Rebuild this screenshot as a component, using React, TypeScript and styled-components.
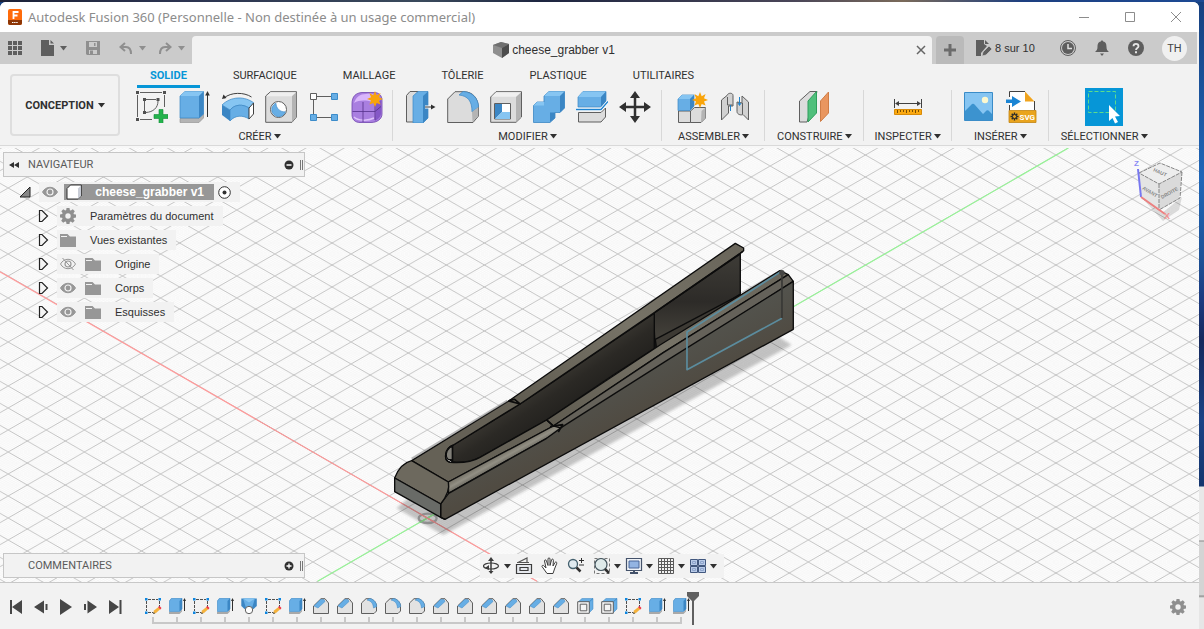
import React from "react";
import styled, { createGlobalStyle } from "styled-components";

const Global = createGlobalStyle`
  * { box-sizing: border-box; }
  html, body { margin: 0; padding: 0; }
  body { font-family: Roboto, "Liberation Sans", sans-serif; font-size: 11px; color: #303030; }
  button { font: inherit; color: inherit; background: none; border: 0; padding: 0; margin: 0; }
  ul, ol { list-style: none; margin: 0; padding: 0; }
  svg { display: block; }
`;

/* ---------- Shell ---------- */

const Desktop = styled.div`
  min-height: 100vh;
  display: flex;
  padding: 2px 5px 0 0;
  background:
    linear-gradient(to right, #1c2238 0, #2b3350 15%, #3a4a5c 35%, #1d2540 45%, #4a4658 66%, #7a6a5a 75%, #1d3f80 85%, #1d4a94 100%) top / 100% 2px no-repeat,
    linear-gradient(to bottom, #17407f 0, #1f66b8 178px, #1c5096 260px, #1b3a80 300px, #14285c 340px, #1a4285 420px, #14356e 486px, #e8e8e8 487px, #e8e8e8 540px, #8a8a8a 541px, #d4d4d4 542px, #d4d4d4 595px, #8a8a8a 596px, #e6e6e6 598px);
`;

const Window = styled.main`
  flex: 1;
  min-width: 0;
  display: flex;
  flex-direction: column;
  background: #f2f2f2;
  border-radius: 6px 6px 0 0;
  overflow: hidden;
`;

const TitleBar = styled.header`
  height: 30px;
  display: flex;
  align-items: center;
  background: #fff;
  padding: 0 7px;
`;

const AppTitle = styled.h1`
  margin: 0 0 0 5px;
  flex: 1;
  font: 400 13px/18px "Noto Sans", "Open Sans", sans-serif;
  color: #8c8c8c;
`;

const WindowControls = styled.div`
  display: flex;
  gap: 14px;
`;

const WindowButton = styled.button`
  width: 32px;
  height: 28px;
  display: grid;
  place-items: center;
`;

/* ---------- Application bar ---------- */

const AppBar = styled.div`
  height: 32px;
  display: flex;
  background: #cbcbcb;
  margin-right: 2px;
`;

const QuickTools = styled.div`
  width: 192px;
  display: flex;
  align-items: center;
  padding-left: 8px;
`;

const QuickButton = styled.button<{ $w: number; $dim?: boolean }>`
  width: ${(p) => p.$w}px;
  height: 24px;
  display: flex;
  align-items: center;
  gap: 6px;
  color: ${(p) => (p.$dim ? "#8f8f8f" : "#5e5e5e")};
`;

const DocumentTab = styled.div`
  flex: 1;
  margin-top: 4px;
  display: flex;
  align-items: center;
  padding: 0 6px 0 0;
  background: #f2f2f2;
  border-radius: 4px 4px 0 0;
`;

const DocumentName = styled.span`
  flex: 1;
  display: flex;
  align-items: center;
  justify-content: center;
  gap: 3px;
  font: 12px/16px "Liberation Sans", sans-serif;
`;

const AddTab = styled.button`
  width: 28px;
  margin: 4px 12px 0 4px;
  display: grid;
  place-items: center;
  background: #bababa;
  border-radius: 4px 4px 0 0;
`;

const AccountTools = styled.div`
  width: 221px;
  display: flex;
  align-items: center;
`;

const ExtensionCount = styled.button`
  width: 84px;
  display: flex;
  align-items: center;
  gap: 3px;
  font: 11px/16px "Liberation Sans", sans-serif;
`;

const AccountButton = styled.button`
  width: 34px;
  display: grid;
  justify-content: start;
`;

const Avatar = styled.button`
  width: 25px;
  height: 25px;
  border-radius: 50%;
  background: #f0f0f0;
  color: #444;
`;

/* ---------- Ribbon ---------- */

const Ribbon = styled.div`
  display: flex;
  height: 84px;
  padding-left: 10px;
  border-bottom: 2px solid #f7f7f7;
  box-shadow: inset 0 -1px #d9d9d9;
`;

const WorkspaceButton = styled.button`
  width: 110px;
  height: 62px;
  margin: 10px 13px 0 0;
  display: flex;
  align-items: center;
  justify-content: center;
  gap: 4px;
  border: 2px solid #dedede;
  border-radius: 4px;
  font-weight: 700;
`;

const RibbonBody = styled.div`
  flex: 1;
  min-width: 0;
`;

const RibbonTabs = styled.div`
  display: flex;
  gap: 20px;
  padding-left: 4px;
`;

const RibbonTab = styled.button<{ $active?: boolean }>`
  height: 24px;
  padding: 2px 13px 0;
  border-bottom: 3px solid ${(p) => (p.$active ? "#0696d7" : "transparent")};
  color: ${(p) => (p.$active ? "#0696d7" : "#303030")};
  font-weight: ${(p) => (p.$active ? 700 : 400)};
  white-space: nowrap;
`;

const Groups = styled.div`
  display: flex;
`;

const Group = styled.section<{ $pad: string }>`
  display: flex;
  flex-direction: column;
  align-items: center;
  flex-shrink: 0;
  padding: ${(p) => p.$pad};
  background: linear-gradient(#d8d8d8, #d8d8d8) right 2px / 1px 51px no-repeat;
  &:last-child { background: none; }
`;

const IconRow = styled.div`
  height: 38px;
  display: flex;
  align-items: center;
  gap: 11px;
`;

const ToolButton = styled.button<{ $on?: boolean }>`
  display: grid;
  place-items: center;
  width: ${(p) => (p.$on ? 38 : 32)}px;
  height: ${(p) => (p.$on ? 38 : 32)}px;
  background: ${(p) => (p.$on ? "#0696d7" : "none")};
`;

const GroupMenu = styled.button`
  display: flex;
  align-items: center;
  gap: 2px;
  height: 20px;
  white-space: nowrap;
`;

/* ---------- Viewport ---------- */

const Viewport = styled.div`
  position: relative;
  flex: 1;
  min-height: 434px;
  display: flex;
  flex-direction: column;
  padding: 4px 3px;
  overflow: hidden;
  background: #fefefe;
  border-bottom: 1px solid #c8c8c8;
`;

const Scene = styled.svg`
  position: absolute;
  inset: 0;
  width: 100%;
  height: 100%;
`;

const Panel = styled.div`
  position: relative;
  width: 302px;
  height: 25px;
  display: flex;
  align-items: center;
  padding: 0 1px 0 4px;
  background: #f2f2f2;
  border: 1px solid #c6c6c6;
  color: #5a5a5a;
`;

const PanelTitle = styled.h2<{ $inset?: boolean }>`
  flex: 1;
  margin: 0 0 0 ${(p) => (p.$inset ? 20 : 8)}px;
  font-size: 11px;
  font-weight: 400;
`;

const PanelGrip = styled.span`
  width: 3px;
  height: 10px;
  margin-left: 6px;
  border: solid #777;
  border-width: 0 1px;
`;

const Tree = styled.ul`
  position: relative;
  padding-top: 3px;
  font: 11px/20px "Liberation Sans", sans-serif;
`;

const TreeRow = styled.li<{ $root?: boolean }>`
  height: 24px;
  display: flex;
  align-items: center;
  padding-left: ${(p) => (p.$root ? 16 : 35)}px;
`;

const Twisty = styled.button<{ $root?: boolean }>`
  width: ${(p) => (p.$root ? 20 : 19)}px;
`;

const NodeBox = styled.span`
  display: flex;
  align-items: center;
  height: 20px;
  padding: 0 9px 0 3px;
  background: #f2f2f2;
`;

const NodeIcon = styled.span<{ $root?: boolean }>`
  width: ${(p) => (p.$root ? 22 : 25)}px;
`;

const NodeLabel = styled.span`
  margin-left: 5px;
`;

const RootLabel = styled.span`
  width: 150px;
  height: 16px;
  display: flex;
  align-items: center;
  justify-content: space-between;
  padding: 0 10px 0 2px;
  margin-right: 4px;
  background: #979797;
  color: #fff;
  font-size: 12px;
  font-weight: 700;
`;

const Spacer = styled.div`
  flex: 1;
`;

const ViewTools = styled.div`
  position: absolute;
  left: 40%;
  bottom: 4px;
  height: 24px;
  display: flex;
  align-items: center;
  padding: 0 3px;
  background: #f2f2f2;
`;

const ViewButton = styled.button<{ $menu?: boolean }>`
  width: ${(p) => (p.$menu ? 32 : 26)}px;
  display: flex;
  align-items: center;
  gap: 3px;
`;

const CubeButton = styled.button`
  position: absolute;
  top: 10px;
  right: 13px;
`;

/* ---------- Timeline ---------- */

const Timeline = styled.footer`
  height: 46px;
  display: flex;
  align-items: flex-start;
  padding: 8px 11px 0 8px;
`;

const Playback = styled.div`
  display: flex;
  gap: 9px;
  width: 133px;
`;

const PlayButton = styled.button`
  width: 16px;
  height: 32px;
  display: grid;
  place-items: center;
`;

const Features = styled.ol`
  display: flex;
  flex: 1;
`;

const Feature = styled.li`
  width: 24px;
  height: 33px;
  padding: 7px 0 0 4px;
  background:
    linear-gradient(#c8c8c8, #c8c8c8) 11px 26px / 2px 5px no-repeat,
    linear-gradient(#c8c8c8, #c8c8c8) 0 31px / 100% 2px no-repeat;
  &:first-child { background-position: 11px 26px, 11px 31px; }
  &:nth-last-child(2) {
    background:
      linear-gradient(#c8c8c8, #c8c8c8) 11px 26px / 2px 5px no-repeat,
      linear-gradient(#c8c8c8, #c8c8c8) 0 31px / 13px 2px no-repeat;
  }
`;

const Marker = styled.li`
  margin-left: -6px;
`;

const SettingsButton = styled.button`
  width: 20px;
  height: 32px;
  display: grid;
  place-items: center;
`;

/* ---------- Icons ---------- */

const Caret = ({ color = "#303030" }: { color?: string }) => (
  <svg width="7" height="5" viewBox="0 0 7 5"><path d="M0 0h7L3.5 4.5z" fill={color} /></svg>
);

const Svg = ({ size = 32, h, children }: { size?: number; h?: number; children: React.ReactNode }) => (
  <svg width={size} height={h ?? size} viewBox={`0 0 ${size} ${h ?? size}`} fill="none">{children}</svg>
);

const B = "#67aee5";
const BD = "#3b86c4";
const BL = "#86c5f2";
const G = "#dcdcdc";
const GD = "#b4b4b4";
const K = "#5f5f5f";
const star = "M8 0l1.700 4.200L13.600 2 12 6.200 16 8l-4 1.600 1.600 4-3.900-1.700L8 16l-1.700-4.100-3.900 1.700L4 9.600 0 8l4-1.800L2.400 2l3.900 2.200z";
const Star = ({ x, y }: { x: number; y: number }) => <path transform={`translate(${x} ${y})`} d={star} fill="#f9a40a" />;

const createIcons: [string, React.ReactNode][] = [
  ["Créer une esquisse", <Svg>
    <path d="M4 1.500h22M1.500 4v22M28.500 4v12M4 28.500h12" stroke={K} />
    <path d="M10 8.500h10M8.500 10v10M22 10c0 7-5 11-12 11.500" stroke={K} />
    <path d="M0 0h3v3H0zM27 0h3v3h-3zM0 27h3v3H0zM7 7h3v3H7zM20.500 7h3v3h-3zM7 20h3v3H7z" fill="#505050" />
    <path d="M23 18.500h4v5h5v4h-5v5h-4v-5h-5v-4h5z" fill="#23b34c" stroke="#128a38" strokeWidth=".6" />
  </Svg>],
  ["Extrusion", <Svg>
    <path d="M1 27.500h19l4.500-4.500v4L20 31.500H1z" fill={GD} stroke="#8d8d8d" strokeWidth=".6" />
    <path d="M1 5L6 .5h18.500V23L20 27H1z" fill={B} stroke={BD} strokeWidth=".7" />
    <path d="M1 5L6 .5h18.500L20 5z" fill={BL} /><path d="M20 5l4.500-4.500V23L20 27z" fill={BD} />
    <path d="M28.500 3v23" stroke="#303030" /><path d="M28.500 0l2.300 4.500h-4.600z" fill="#303030" />
  </Svg>],
  ["Révolution", <Svg>
    <path d="M0 14C9 5 23 5 32 12l-5 5c-6-4-14-4-19 2z" fill={BL} stroke={BD} strokeWidth=".7" />
    <path d="M8 19c5-6 13-6 19-2v11c-6-4-14-4-19 2z" fill={B} stroke={BD} strokeWidth=".7" />
    <path d="M0 14l8 5v11l-8-6z" fill={BD} />
    <path d="M27 17l4.500-5v11L27 28z" fill="#fff" stroke="#404040" />
    <path d="M2 7C9 1 22 1 29.500 6" stroke="#404040" /><path d="M0 8l1.500-4.500L4.500 7z" fill="#303030" />
  </Svg>],
  ["Perçage", <Svg>
    <path d="M.7 5L5.500.7h26V26L27 31.300H.7z" fill={G} stroke={K} />
    <path d="M1.300 5.300L5.800 1.300h25L27 5.300z" fill="#efefef" /><path d="M27 5.300l4.300-4V26L27 31z" fill={GD} />
    <circle cx="13.500" cy="18.500" r="8" fill="#fff" stroke={K} />
    <path d="M11 12.200c0 5 4 9 9.400 8.600a7 7 0 1 1-9.400-8.600z" fill={B} stroke={BD} strokeWidth=".6" />
  </Svg>],
  ["Réseau", <Svg>
    <path d="M9 5.500h14M5.500 9v14M9 26.500h14" stroke={K} />
    <path d="M2.500 2.500h6v6h-6z" fill="#fff" stroke={K} />
    <path d="M23.500 2.500h6v6h-6zM2.500 23.500h6v6h-6zM23.500 23.500h6v6h-6z" fill={B} stroke="#3c8cca" />
  </Svg>],
  ["Créer une forme", <Svg>
    <path d="M1 13C1 5 5 2 11 1.500h12c5 0 8 3 8 8V23c0 5-5 8.500-11 8.500H9c-5 0-8-3-8-8z" fill="#a97fe0" stroke="#6f42ad" strokeWidth=".8" />
    <path d="M3 12c2-6 6-9 12-9 6-1 10 1 10 4l-4 4c-6-2-13-2-18 1z" fill="#d9b6fb" />
    <path d="M25 12l5-3v13c0 4-3 6-6 8z" fill="#8558c7" />
    <path d="M3 26c4 4 14 4 20 1" stroke="#dcc0fa" strokeWidth="1.500" />
    <path d="M1.500 20.500H24l6-5M12 11v20M24 11v18" stroke="#55318c" strokeWidth=".8" />
    <Star x={16} y={0} />
  </Svg>],
];

const modifyIcons: [string, React.ReactNode][] = [
  ["Appuyer/Tirer", <Svg>
    <path d="M2.500 4.500L6 .5h8V31H2.500z" fill={G} stroke={K} />
    <path d="M9 5l5-4.500h10V27l-5 5H9z" fill={B} stroke={BD} strokeWidth=".7" /><path d="M19 5l5-4.500V27l-5 5z" fill={BD} />
    <path d="M21 16h7" stroke="#fff" strokeWidth="3" /><path d="M21 16h7" stroke="#303030" /><path d="M31.500 16L27 13.500v5z" fill="#303030" />
  </Svg>],
  ["Congé", <Svg>
    <path d="M.7 8L8 .7h9C26 1 31 7 31.500 17v8L26 31.500H.7z" fill={G} stroke={K} />
    <path d="M12 4L16 .5C26 1 31.500 8 31.500 16L25 21C25 10 21 5 12 4z" fill={B} stroke={BD} strokeWidth=".7" />
    <path d="M25 21l6.300-5v9L25.500 31z" fill={GD} />
  </Svg>],
  ["Coque", <Svg>
    <path d="M.7 6L6 .7h25.500V26L26 31.300H.7z" fill={G} stroke={K} /><path d="M1.500 5.800L6.200 1.300h25L26 5.800z" fill="#f0f0f0" />
    <path d="M26 6l5-4.500V26l-5 5z" fill={GD} />
    <path d="M4.500 12.500h16V28h-16z" fill="#fff" stroke={K} /><path d="M5 13h7v8l-7 7z" fill={BD} /><path d="M12 21h8v7H5z" fill={BL} />
  </Svg>],
  ["Combiner", <Svg>
    <path d="M.5 14.500L4 11h7V5L16 .5h15.500V17L27 21.500h-5V27l-5 4.500H.5z" fill={B} stroke={BD} strokeWidth=".8" />
    <path d="M11 5L16 .5h15.500L27 5zM.5 14.500L4 11h7v3.500z" fill={BL} /><path d="M27 5l4.500-4.500V17L27 21.500zM17 26v-4.500h5V27l-5 4z" fill={BD} />
  </Svg>],
  ["Scinder le corps", <Svg>
    <path d="M2 6L7 .5h23V11L25 16H2z" fill={B} stroke={BD} strokeWidth=".7" /><path d="M2 6L7 .5h23L25 6z" fill={BL} /><path d="M25 6l5-5.500V11L25 16z" fill={BD} />
    <path d="M2.500 21.500H25L29.500 17v9L25 31H2.500z" fill={G} stroke={K} />
    <path d="M0 18.500h25l7-8" stroke="#fff" strokeWidth="3" /><path d="M0 18.500h25l7-8" stroke="#1d82cf" strokeWidth="1.300" />
  </Svg>],
  ["Déplacer", <Svg>
    <path d="M16 4v24M4 16h24" stroke="#303030" strokeWidth="2.500" />
    <path d="M16 0l5 7H11zM16 32l5-7H11zM0 16l7-5v10zM32 16l-7-5v10z" fill="#303030" />
  </Svg>],
];

const assembleIcons: [string, React.ReactNode][] = [
  ["Nouveau composant", <Svg>
    <path d="M2.500 20h12v11.500h-12z" fill={G} stroke={K} /><path d="M14.500 20l4-3.500h11V27L25 31.500H14.500z" fill={G} stroke={K} /><path d="M25.500 20l4-3.500V27L25 31z" fill={GD} />
    <path d="M2 8l4-4h12v11l-4 4.500H2z" fill={B} stroke={BD} strokeWidth=".7" /><path d="M2 8l4-4h12l-4 4z" fill={BL} /><path d="M14 8l4-4v11l-4 4.500z" fill={BD} />
    <Star x={16} y={1} />
  </Svg>],
  ["Liaison", <Svg>
    <path d="M2.500 9L8 4.500c1-3 6-3 6 0V15H9.500v7l-7 7z" fill="#d2d2d2" stroke={K} /><path d="M8.500 6v8h5" stroke={K} />
    <path d="M29.500 29L24 23.500c-2 1-6 0-6-3V11l5 1V5l6.500 6z" fill="#d2d2d2" stroke={K} /><path d="M23.500 12v11" stroke={K} />
    <path d="M11.500 14v6M20.500 6v8M19 12l1.500 2.500L22 12" stroke="#1f83cc" />
  </Svg>],
];

const constructIcons: [string, React.ReactNode][] = [
  ["Plan de construction", <Svg>
    <path d="M1.500 10L12 .5h7L9 31H1.500z" fill={G} stroke={K} /><path d="M10 10L18.500.5V22L10 31z" fill="#50c07c" stroke="#2f9e5c" />
    <path d="M22.500 10L30.500 1v21l-8 8.500z" fill="#e9965f" stroke="#cf7d46" />
  </Svg>],
];

const inspectIcons: [string, React.ReactNode][] = [
  ["Mesurer", <Svg>
    <path d="M2.500 8v9M29.500 8v9M5 12.500h22" stroke="#404040" /><path d="M3 12.500l4-2.500v5zM29 12.500L25 10v5z" fill="#404040" />
    <path d="M2.500 18.500h27v5h-27z" fill="#fba911" stroke="#d88b08" /><path d="M5.500 19v3M8.500 19v2M11.500 19v2M14.500 19v3M17.500 19v2M20.500 19v2M23.500 19v3M26.500 19v2" stroke="#7b4e00" />
  </Svg>],
];

const insertIcons: [string, React.ReactNode][] = [
  ["Insérer une image", <Svg>
    <path d="M1.500 1.500h28v28h-28z" fill={BL} stroke="#3a8cc8" /><circle cx="22" cy="9" r="3.200" fill="#fdf8cf" />
    <path d="M2 20l7-7q1.500-1 3 1l8 9 3.500-3.500q1.500-1 3 1L29 23v6H2z" fill="#3c93cf" />
  </Svg>],
  ["Insérer un fichier SVG", <Svg>
    <path d="M3.500.5H19l9.500 9.500v10h-25z" fill="#fff" /><path d="M3.500 6V.5H19M3.500 14v6M28.500 10v9" stroke="#404040" /><path d="M19 .5v10h9.500z" fill="#f0a41f" />
    <path d="M-3 8.500h9V5l9 5.500L6 16v-4h-9z" fill="#1a84d4" />
    <path d="M3 19.500h27v12H3z" fill="#e9a41d" stroke="#c28412" strokeWidth=".8" />
    <path d="M8.500 21.500v8M4.500 25.500h8M5.700 22.700l5.600 5.600M11.300 22.700l-5.600 5.600" stroke="#2a2a2a" strokeWidth="1.400" /><circle cx="8.500" cy="25.500" r="2" fill="#e9a41d" stroke="#2a2a2a" />
    <text x="13.500" y="29" fontSize="8" fontWeight="700" fill="#fff" fontFamily="Roboto">SVG</text>
  </Svg>],
];

const selectIcons: [string, React.ReactNode][] = [
  ["Sélectionner", <Svg size={38}>
    <path d="M3.500 3.500h27v21h-27z" stroke="#5ddc8c" strokeDasharray="4 2" />
    <path d="M24 17l11 11-5 .5 3 5.500-3 1.500-2.500-5.500-3.500 3z" fill="#fff" />
  </Svg>],
];

const gearPath = "M6.500 0h3l.4 2.200 1 .4 1.900-1.300 2 2-1.300 1.900.4 1 2.100.3v3l-2.200.4-.4 1 1.300 1.900-2 2-1.900-1.300-1 .4L9.500 16h-3l-.4-2.200-1-.4-1.900 1.300-2-2 1.300-1.900-.4-1L0 9.500v-3l2.200-.4.400-1-1.300-1.900 2-2 1.900 1.300 1-.4zM8 5.300a2.700 2.700 0 1 0 0 5.400 2.700 2.700 0 0 0 0-5.400z";
const Gear = () => <Svg size={16}><path d={gearPath} fill="#8f8f8f" fillRule="evenodd" /></Svg>;
const Folder = () => <Svg size={16} h={13}><path d="M0 0h7.500L10 2.500h6V13H0z" fill="#979797" /><path d="M1 2.500h6" stroke="#f2f2f2" /></Svg>;
const Eye = ({ off }: { off?: boolean }) => (
  <Svg size={16} h={12}>
    <path d="M.5 6C4-.3 12-.3 15.500 6 12 12.300 4 12.300.5 6z" fill={off ? "none" : "#979797"} stroke="#979797" />
    <circle cx="8" cy="6" r="3" fill={off ? "none" : "#979797"} stroke={off ? "#979797" : "#f2f2f2"} strokeWidth="1.200" />
    {off && <path d="M2.500 0l11 12" stroke="#979797" />}
  </Svg>
);

const SketchMini = () => (
  <Svg size={17}>
    <path d="M3 1.500h10M1.500 3v10M14.500 3v6M3 14.500h5" stroke="#505050" strokeDasharray="3 1" />
    <path d="M0 0h2.500v2.500H0zM13.500 0H16v2.500h-2.500zM0 13.500h2.500V16H0z" fill="#0d86e0" />
    <path d="M8 16l1-3.500 4.500-3.500 2 2-4.500 4z" fill="#f5b23c" /><path d="M13 9l1.500-1 2 2-1.200 1.500z" fill="#ee3344" /><path d="M8 16l.6-2 1.700 1.500z" fill="#555" />
  </Svg>
);
const ExtrudeMini = () => (
  <Svg size={17}>
    <path d="M0 14h10.500L13 11.500v2L10.500 16H0z" fill="#a9a9a9" />
    <path d="M.3 3L2.500.3H13V11l-2.500 2.500H.3z" fill={B} stroke={BD} strokeWidth=".6" /><path d="M10.500 3L13 .3V11l-2.500 2.500z" fill={BD} />
    <path d="M15.500 2v11" stroke="#303030" /><path d="M15.500 0L17 3h-3z" fill="#303030" />
  </Svg>
);
const LoftMini = () => (
  <Svg size={17}><path d="M.3.500h15.500V8L12.500 11h-9L.3 8z" fill={BD} /><path d="M2 .5h12L11 10H5z" fill={B} /><path d="M2 .5h12L8 4.500z" fill={BL} /><circle cx="8" cy="12" r="3.700" fill="#fff" stroke={K} /></Svg>
);
const ChamferMini = () => (
  <Svg size={17}><path d="M.5 8L8 .7h4L15.500 5v10.500H.5z" fill="#e2e2e2" stroke={K} /><path d="M1 8L7.500 1.500h3.500L12 3.500 5 10z" fill={B} stroke={BD} strokeWidth=".5" /></Svg>
);
const FilletMini = () => (
  <Svg size={17}><path d="M.5 5L5 .7h4c4 .8 6.500 4 6.500 8V13L13 15.500H.5z" fill="#e2e2e2" stroke={K} /><path d="M6 2L8.500.5C13 1 15.700 5 15.700 8.500L12.500 10C12 5 10 3 6 2z" fill={B} stroke={BD} strokeWidth=".5" /></Svg>
);
const ShellMini = () => (
  <Svg size={17}><path d="M1 4L5 .5h11L12 4zM12 4l4-3.500V11l-4 4z" fill={B} stroke={BD} strokeWidth=".5" /><path d="M.7 3.700h11.600v11.600H.7zM3.200 6.200h6.600v6.600H3.200z" fill="#f4f4f4" stroke={K} /></Svg>
);

const featureIcons: Record<string, () => React.JSX.Element> = {
  sketch: SketchMini, extrude: ExtrudeMini, loft: LoftMini, chamfer: ChamferMini, fillet: FilletMini, shell: ShellMini,
};
const history = [
  "sketch", "extrude", "sketch", "extrude", "loft", "sketch", "extrude", "chamfer", "chamfer", "fillet", "fillet", "fillet",
  "chamfer", "chamfer", "chamfer", "chamfer", "chamfer", "chamfer", "shell", "shell", "sketch", "extrude", "extrude",
];

const playback: [string, string][] = [
  ["Début", "M2 1h2v14H2zM14 1v14L4 8z"],
  ["Reculer", "M11 1.500v13L1 8zM12.500 5h2v6h-2z"],
  ["Lire", "M2 0l12 8L2 16z"],
  ["Avancer", "M4.500 1.500v13L14 8zM1 5h2v6H1z"],
  ["Fin", "M1 1v14l10-7zM11.500 1h2v14h-2z"],
];

const groups: { name: string; pad: string; icons: [string, React.ReactNode][] }[] = [
  { name: "CRÉER", pad: "0 10px 0 3px", icons: createIcons },
  { name: "MODIFIER", pad: "0 11px", icons: modifyIcons },
  { name: "ASSEMBLER", pad: "0 14px", icons: assembleIcons },
  { name: "CONSTRUIRE", pad: "0 12px", icons: constructIcons },
  { name: "INSPECTER", pad: "0 11px", icons: inspectIcons },
  { name: "INSÉRER", pad: "0 11px", icons: insertIcons },
  { name: "SÉLECTIONNER", pad: "0 12px", icons: selectIcons },
];

const viewTools: [string, boolean, React.ReactNode][] = [
  ["Orbite", true, <Svg size={18}><ellipse cx="8" cy="9" rx="7.500" ry="3" stroke="#3c3c3c" strokeWidth="1.200" /><path d="M8 2v14" stroke="#3c3c3c" strokeWidth="1.500" /><path d="M8 0l3 4H5zM8 17l2.500-3h-5zM2 11l4-3v5z" fill="#3c3c3c" /></Svg>],
  ["Regarder", false, <Svg size={18}><path d="M1.500 7.500h15v9h-15zM5 10.500h8v3H5z" fill="#e6e9ee" stroke="#3c3c3c" strokeWidth="1.200" /><path d="M3 5.500L12 1v4.500M2 5.500h12" stroke="#555" strokeWidth="1.200" /></Svg>],
  ["Panoramique", false, <Svg size={18}><path d="M6 16.500L1 9.500c0-1.500 1.500-1.500 2.200-.5L5 11 3.500 4c0-1.500 1.700-1.500 2 0L7 8.500V2c0-1.500 2-1.500 2 0v6.500L10.500 3c.5-1.500 2-1 1.900.3L12 9l2-3.500c.7-1 2-.5 1.800.7L13.500 12 12 16.500z" fill="#fff" stroke="#3c3c3c" /></Svg>],
  ["Zoom", false, <Svg size={18}><circle cx="6" cy="7" r="4.500" fill="#dfeaf0" stroke="#44606e" strokeWidth="1.300" /><path d="M9.500 10.500l4 4" stroke="#303030" strokeWidth="2.500" /><path d="M12 3.500h5M14.500 1v5M12 8h5" stroke="#303030" /></Svg>],
  ["Zoom fenêtre", true, <Svg size={18}><path d="M1.500 1.500h15v15h-15z" stroke="#777" strokeDasharray="3 2" /><circle cx="8" cy="7.500" r="6" fill="#dfeaea" stroke="#44555e" strokeWidth="1.200" /><path d="M12 12l4 4" stroke="#303030" strokeWidth="2.500" /></Svg>],
  ["Affichage", true, <Svg size={18}><path d="M1.500 1.500h15v12h-15z" fill="#eef2f7" stroke="#44526a" strokeWidth="1.200" /><path d="M4 4h10v7H4z" fill="#93b4e2" stroke="#4a6799" /><path d="M5 16h8M9 14v2" stroke="#44526a" strokeWidth="2" /></Svg>],
  ["Grille", true, <Svg size={18}><path d="M1.500 1.500h15v15h-15zM4.500 1v16M7.500 1v16M10.500 1v16M13.500 1v16M1 4.500h16M1 7.500h16M1 10.500h16M1 13.500h16" stroke="#5a5a5a" /></Svg>],
  ["Vues", true, <Svg size={18}><path d="M1.500 2.500h7v6h-7zM9.500 2.500h7v6h-7zM1.500 9.500h7v6h-7zM9.500 9.500h7v6h-7z" fill="#b9cbe8" stroke="#42587f" /><path d="M3.500 4.500h3v2h-3zM11.500 4.500h3v2h-3zM3.500 11.500h3v2h-3zM11.500 11.500h3v2h-3z" stroke="#8fa5cc" /></Svg>],
];

/* The 3D scene: isometric ground grid, axes and the part itself. */
const minor = Array.from({ length: 9 }, (_, i) => i + 1);
const SceneDrawing = () => (
  <Scene aria-label="Modèle 3D" role="img">
    <defs>
      <pattern id="grid" width="38.1" height="22" x="8.200" y="18" patternUnits="userSpaceOnUse">
        <g stroke="#f1f1f1" strokeWidth=".5">
          {minor.map((i) => (
            <path key={i} d={`M${i * 3.81} 0L38.1 ${22 - i * 2.2}M0 ${i * 2.2}L${38.1 - i * 3.81} 22M${i * 3.81} 0L0 ${i * 2.2}M38.1 ${i * 2.2}L${i * 3.81} 22`} />
          ))}
        </g>
        <path d="M0 0L38.1 22M38.1 0L0 22" stroke="#bdbdbd" strokeWidth=".9" />
      </pattern>
      <linearGradient id="rail" x1="0" y1="1" x2="1" y2="0"><stop offset="0" stopColor="#5f5b50" /><stop offset=".5" stopColor="#777367" /><stop offset="1" stopColor="#69655a" /></linearGradient>
      <linearGradient id="cavity" gradientUnits="userSpaceOnUse" x1="440" y1="430" x2="560" y2="610"><stop offset="0" stopColor="#46433c" /><stop offset=".45" stopColor="#2b2925" /><stop offset="1" stopColor="#1b1a18" /></linearGradient>
      <linearGradient id="plate" x1="0" y1="0" x2="0" y2="1"><stop offset="0" stopColor="#3e3c37" /><stop offset=".5" stopColor="#2d2b28" /><stop offset="1" stopColor="#4a473f" /></linearGradient>
      <linearGradient id="side" gradientUnits="userSpaceOnUse" x1="700" y1="440" x2="760" y2="555"><stop offset="0" stopColor="#53534d" /><stop offset=".5" stopColor="#514f48" /><stop offset="1" stopColor="#504b42" /></linearGradient>
      <linearGradient id="round" gradientUnits="userSpaceOnUse" x1="350" y1="668" x2="372" y2="708"><stop offset="0" stopColor="#666257" /><stop offset=".5" stopColor="#928f84" /><stop offset="1" stopColor="#55534c" /></linearGradient>
      <filter id="soft" x="-5%" y="-5%" width="110%" height="110%"><feGaussianBlur stdDeviation="5" /></filter>
    </defs>
    <rect width="100%" height="100%" fill="url(#grid)" />
    <path d="M0 123.700L427.300 370 537 433.300" stroke="#ff9a9a" strokeWidth="1.200" />
    <path d="M317.600 433.300L427.300 370 1068.400 0" stroke="#96f596" strokeWidth="1.200" />
    <g transform="translate(380 82) scale(.3333)" strokeLinejoin="round">
      <path d="M50 835L190 915 1235 345 1180 310 200 860 90 800z" fill="#000" opacity=".22" filter="url(#soft)" />
      <ellipse cx="143" cy="865" rx="27" ry="14" fill="none" stroke="#777" strokeWidth="7" opacity=".7" />
      <path d="M120 877l46-26" stroke="#7bc47b" strokeWidth="4" /><path d="M120 852l46 26" stroke="#d08080" strokeWidth="4" />
      <g stroke="#0c0c0c" strokeWidth="4">
        <path d="M820 250L1081 72V192L826 356z" fill="url(#plate)" />
        <path d="M220 645L420 522C560 430 700 330 823 250V356L700 435 500 570 300 682C270 697 240 698 222 696 205 696 200 660 220 645z" fill="url(#cavity)" />
        <path d="M826 328L1081 194 1100 200 830 358z" fill="#3d3a34" />
        <path d="M386 513L1066 40 1091 54V62L1081 70 823 248 420 522z" fill="url(#rail)" />
        <path d="M1089 64L826 246" fill="none" />
        <path d="M95 692L386 513 420 522 220 645C195 655 188 690 210 697 250 700 275 697 300 682L500 570 515 578 520 588 205 756z" fill="#656156" />
        <path d="M205 756L520 588 548 584C545 600 530 610 500 625L206 790z" fill="url(#round)" />
        <path d="M500 570L840 345 1200 122 1225 134 850 368 520 588z" fill="url(#rail)" />
        <path d="M520 588L850 368 1225 134 1240 154 860 398 548 596z" fill="#65625a" />
        <path d="M206 790L500 625 548 590 860 392 1240 154V298L195 868 182 862V822z" fill="url(#side)" />
        <path d="M44 744C55 715 70 698 95 692L205 756C210 780 200 800 182 822z" fill="#6d695e" />
        <path d="M44 744L182 822V862L44 785z" fill="#696b67" />
        <path d="M195 868L182 862" />
        <path d="M218 646V694M218 646C195 655 188 690 210 697" fill="none" />
        <path d="M210 652C196 665 196 680 204 688L217 690V650z" fill="#817f78" />
        <path d="M388 512L404 508 420 522M500 570L520 588 548 584M510 590L548 584 535 606" fill="none" strokeWidth="5" />
      </g>
      <path d="M1204 124L921 306V419L1206 265" fill="none" stroke="#5b8c9e" strokeWidth="5" />
      <path d="M1206 126V264" stroke="#383836" strokeWidth="5" /><circle cx="1206" cy="128" r="8" fill="#454543" />
      <path d="M95 686L382 512" stroke="#777" strokeWidth="6" opacity=".5" />
    </g>
  </Scene>
);

const ViewCube = () => (
  <Svg size={52} h={68}>
    <path d="M8 40l20 15 20-16-3 13-16 11z" fill="#000" opacity=".12" />
    <path d="M5 15L26 5l22 9-23 12z" fill="#ededed" /><path d="M5 15l20 11v26L8 41z" fill="#e4e4e4" /><path d="M25 26l23-12-3 27-20 11z" fill="#dadada" />
    <path d="M5 15L26 5l22 9-23 12zM25 26v26M48 14l-2 26-21 12L8 40" stroke="#858585" strokeDasharray="4 1" />
    <path d="M4 11l3 28" stroke="#7878f0" strokeWidth="2" /><path d="M7 39l24 17" stroke="#ec8080" strokeWidth="2" />
    <g fontFamily="Liberation Sans" fontSize="6" fontWeight="700" fill="#888">
      <text transform="translate(19 13) rotate(24)" fontSize="5">HAUT</text>
      <text transform="translate(8 31) rotate(31)" fontSize="5">AVANT</text>
      <text transform="translate(28 41) rotate(-29)" fontSize="5">DROITE</text>
      <text x="0" y="8" fontSize="8" fill="#8a8af5">Z</text><text x="30" y="61" fontSize="9" fill="#f29090">X</text>
    </g>
  </Svg>
);

const tree: { label: string; icon: React.ReactNode; eye?: "on" | "off" }[] = [
  { label: "Paramètres du document", icon: <Gear /> },
  { label: "Vues existantes", icon: <Folder /> },
  { label: "Origine", icon: <Folder />, eye: "off" },
  { label: "Corps", icon: <Folder />, eye: "on" },
  { label: "Esquisses", icon: <Folder />, eye: "on" },
];

const ribbonTabs = ["SOLIDE", "SURFACIQUE", "MAILLAGE", "TÔLERIE", "PLASTIQUE", "UTILITAIRES"];

export default function App() {
  return (
    <Desktop>
      <Global />
      <Window>
        <TitleBar>
          <Svg size={16} h={17}>
            <rect x="1" y="0" width="14" height="16" rx="2" fill="#ff6b0a" /><path d="M1 11h14v3a2 2 0 0 1-2 2H3a2 2 0 0 1-2-2z" fill="#8d3606" />
            <path d="M6.500 10V3h5M6.500 6.500h4" stroke="#fff" strokeWidth="1.800" /><path d="M5 13.500h6" stroke="#fff" strokeDasharray="1.500 .6" />
          </Svg>
          <AppTitle>Autodesk Fusion 360 (Personnelle - Non destinée à un usage commercial)</AppTitle>
          <WindowControls>
            <WindowButton aria-label="Réduire"><Svg size={12}><path d="M1 6.500h10" stroke="#8c8c8c" /></Svg></WindowButton>
            <WindowButton aria-label="Agrandir"><Svg size={12}><path d="M1.500 1.500h9v9h-9z" stroke="#8c8c8c" /></Svg></WindowButton>
            <WindowButton aria-label="Fermer"><Svg size={12}><path d="M1 1l10 10M11 1L1 11" stroke="#8c8c8c" /></Svg></WindowButton>
          </WindowControls>
        </TitleBar>

        <AppBar>
          <QuickTools>
            <QuickButton $w={33} aria-label="Panneau de données"><Svg size={14}><path d="M0 0h4v4H0zM5 0h4v4H5zM10 0h4v4h-4zM0 5h4v4H0zM5 5h4v4H5zM10 5h4v4h-4zM0 10h4v4H0zM5 10h4v4H5zM10 10h4v4h-4z" fill="currentColor" /></Svg></QuickButton>
            <QuickButton $w={45} aria-label="Fichier"><Svg size={13} h={16}><path d="M0 0h8v5h5v11H0zM9.500 0L13 3.500H9.500z" fill="currentColor" /></Svg><Caret color="#5e5e5e" /></QuickButton>
            <QuickButton $w={33} $dim aria-label="Enregistrer"><Svg size={14}><path d="M0 0h14v14H1l-1-1zM3 1v5h8V1zM3 9v4h8V9z" fill="currentColor" fillRule="evenodd" /><path d="M8 2h1.500v3H8zM4 9.500h3V13H4z" fill="currentColor" /></Svg></QuickButton>
            <QuickButton $w={39} $dim aria-label="Annuler"><Svg size={14}><path d="M6 2L1.500 6 6 10M2 6h5c4 0 5 3 5 7" stroke="currentColor" strokeWidth="2" /></Svg><Caret color="#8f8f8f" /></QuickButton>
            <QuickButton $w={30} $dim aria-label="Rétablir"><Svg size={14}><path d="M8 2l4.500 4L8 10M12 6H7c-4 0-5 3-5 7" stroke="currentColor" strokeWidth="2" /></Svg><Caret color="#8f8f8f" /></QuickButton>
          </QuickTools>
          <DocumentTab>
            <DocumentName>
              <Svg size={16}><path d="M0 3l8-3 8 2v9l-7 5-9-5z" fill="#8f8f8f" /><path d="M0 3l8-3 8 2-7 4z" fill="#707070" /><path d="M9 6l7-4v9l-7 5z" fill="#4c4c4c" /></Svg>
              cheese_grabber v1
            </DocumentName>
            <button aria-label="Fermer l'onglet"><Svg size={10}><path d="M1 1l8 8M9 1L1 9" stroke="#666" strokeWidth="1.500" /></Svg></button>
          </DocumentTab>
          <AddTab aria-label="Nouvel onglet"><Svg size={14}><path d="M7 1v12M1 7h12" stroke="#6c6c6c" strokeWidth="3" /></Svg></AddTab>
          <AccountTools>
            <ExtensionCount><Svg size={16}><path d="M0 0h8v4l3 2-6 7v3H0zM9 0l4 4H9z" fill="#5e5e5e" /><path d="M6 16l1-4 6-6 3 3-6 6z" fill="#5e5e5e" stroke="#cbcbcb" strokeWidth=".7" /></Svg>8 sur 10</ExtensionCount>
            <AccountButton aria-label="État des tâches"><Svg size={16}><circle cx="8" cy="8" r="7.500" stroke="#5e5e5e" /><circle cx="8" cy="8" r="6" fill="#5e5e5e" /><path d="M8 4v4.500h4" stroke="#e0e0e0" strokeWidth="1.500" /></Svg></AccountButton>
            <AccountButton aria-label="Notifications"><Svg size={16}><path d="M8 0l1.200 1.500C12 2 12.500 4.500 12.500 7c0 2.500 1 3.500 2.500 5H1c1.500-1.500 2.500-2.500 2.500-5 0-2.500.5-5 3.300-5.500zM6 13.500h4L8 16z" fill="#5e5e5e" /></Svg></AccountButton>
            <AccountButton aria-label="Aide"><Svg size={16}><circle cx="8" cy="8" r="8" fill="#5e5e5e" /><path d="M5.500 6.200c0-3.200 5-3.200 5 0C10.500 8 8 8 8 10" stroke="#e6e6e6" strokeWidth="1.800" /><path d="M7 11.300h2v2H7z" fill="#e6e6e6" /></Svg></AccountButton>
            <Avatar>TH</Avatar>
          </AccountTools>
        </AppBar>

        <Ribbon>
          <WorkspaceButton>CONCEPTION <Caret /></WorkspaceButton>
          <RibbonBody>
            <RibbonTabs>
              {ribbonTabs.map((t, i) => <RibbonTab key={t} $active={i === 0}>{t}</RibbonTab>)}
            </RibbonTabs>
            <Groups>
              {groups.map((g) => (
                <Group key={g.name} $pad={g.pad}>
                  <IconRow>
                    {g.icons.map(([label, icon]) => (
                      <ToolButton key={label} aria-label={label} $on={g.name === "SÉLECTIONNER"}>{icon}</ToolButton>
                    ))}
                  </IconRow>
                  <GroupMenu>{g.name} <Caret /></GroupMenu>
                </Group>
              ))}
            </Groups>
          </RibbonBody>
        </Ribbon>

        <Viewport>
          <SceneDrawing />
          <Panel>
            <Svg size={12} h={8}><path d="M6 1v6L1 4zM11 1v6L6 4z" fill="#303030" /></Svg>
            <PanelTitle>NAVIGATEUR</PanelTitle>
            <button aria-label="Réduire le navigateur"><Svg size={10}><circle cx="5" cy="5" r="4.500" fill="#303030" /><path d="M2.500 5h5" stroke="#fff" strokeWidth="1.500" /></Svg></button>
            <PanelGrip />
          </Panel>
          <Tree>
            <TreeRow $root>
              <Twisty $root aria-label="Replier"><Svg size={12}><path d="M11 1v10H1z" fill="#888" stroke="#222" /></Svg></Twisty>
              <NodeBox>
                <NodeIcon $root><Eye /></NodeIcon>
                <RootLabel>
                  <Svg size={16}><path d="M1 4.500L4.500 1h10.800v11L12 15H1z" fill="#fff" stroke="#303030" /><path d="M12 4.500L15 1.500V12l-3 3z" fill="#c9cdd6" /></Svg>
                  cheese_grabber v1
                </RootLabel>
                <Svg size={13}><circle cx="6.500" cy="6.500" r="5.800" fill="#fff" stroke="#303030" /><circle cx="6.500" cy="6.500" r="2" fill="#303030" /></Svg>
              </NodeBox>
            </TreeRow>
            {tree.map((n) => (
              <TreeRow key={n.label}>
                <Twisty aria-label={`Déplier ${n.label}`}><Svg size={11} h={14}><path d="M1.500 1.500h2.500L9.500 7 4 12.500H1.500z" fill="#f4f4f4" stroke="#222" strokeWidth="1.200" /></Svg></Twisty>
                <NodeBox>
                  {n.eye && <NodeIcon><Eye off={n.eye === "off"} /></NodeIcon>}
                  <NodeIcon>{n.icon}</NodeIcon>
                  <NodeLabel>{n.label}</NodeLabel>
                </NodeBox>
              </TreeRow>
            ))}
          </Tree>
          <Spacer />
          <Panel>
            <PanelTitle $inset>COMMENTAIRES</PanelTitle>
            <button aria-label="Développer les commentaires"><Svg size={10}><circle cx="5" cy="5" r="4.500" fill="#303030" /><path d="M2.500 5h5M5 2.500v5" stroke="#fff" strokeWidth="1.300" /></Svg></button>
            <PanelGrip />
          </Panel>
          <ViewTools>
            {viewTools.map(([label, menu, icon]) => (
              <ViewButton key={label} $menu={menu} aria-label={label}>{icon}{menu && <Caret />}</ViewButton>
            ))}
          </ViewTools>
          <CubeButton aria-label="Cube de vue"><ViewCube /></CubeButton>
        </Viewport>

        <Timeline>
          <Playback>
            {playback.map(([label, d]) => (
              <PlayButton key={label} aria-label={label}><Svg size={16}><path d={d} fill="#474747" /></Svg></PlayButton>
            ))}
          </Playback>
          <Features>
            {history.map((f, i) => {
              const Icon = featureIcons[f];
              return <Feature key={i}><Icon /></Feature>;
            })}
            <Marker><Svg size={12} h={34}><path d="M0 1h12v4L7 10v24H5V10L0 5z" fill="#606060" /></Svg></Marker>
          </Features>
          <SettingsButton aria-label="Préférences"><Gear /></SettingsButton>
        </Timeline>
      </Window>
    </Desktop>
  );
}
